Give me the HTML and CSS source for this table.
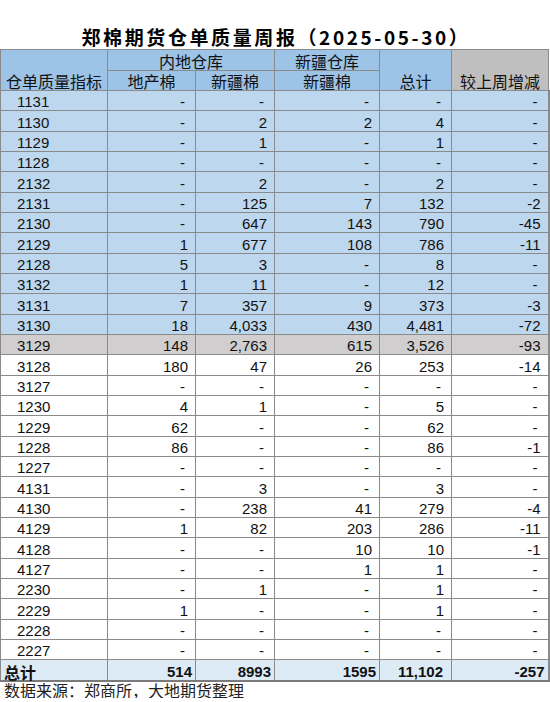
FILE: index.html
```html
<!DOCTYPE html>
<html lang="zh">
<head>
<meta charset="utf-8">
<link rel="stylesheet" href="styles.css">
</head>
<body>
<div class="page">
  <div class="title">郑棉期货仓单质量周报（2025-05-30）</div>
  <table class="t">
    <colgroup>
      <col class="c1"><col class="c2"><col class="c3"><col class="c4"><col class="c5"><col class="c6">
    </colgroup>
    <thead>
      <tr class="hr1">
        <th class="hb lab" rowspan="2">仓单质量指标</th>
        <th class="hb" colspan="2">内地仓库</th>
        <th class="hb">新疆仓库</th>
        <th class="hb lab" rowspan="2">总计</th>
        <th class="hg lab" rowspan="2">较上周增减</th>
      </tr>
      <tr class="hr2">
        <th class="hb">地产棉</th>
        <th class="hb">新疆棉</th>
        <th class="hb">新疆棉</th>
      </tr>
    </thead>
    <tbody>
      <tr class="b"><td>1131</td><td><span class="z">-</span></td><td><span class="z">-</span></td><td><span class="z">-</span></td><td><span class="z">-</span></td><td><span class="z">-</span></td></tr>
      <tr class="b"><td>1130</td><td><span class="z">-</span></td><td>2</td><td>2</td><td>4</td><td><span class="z">-</span></td></tr>
      <tr class="b"><td>1129</td><td><span class="z">-</span></td><td>1</td><td><span class="z">-</span></td><td>1</td><td><span class="z">-</span></td></tr>
      <tr class="b"><td>1128</td><td><span class="z">-</span></td><td><span class="z">-</span></td><td><span class="z">-</span></td><td><span class="z">-</span></td><td><span class="z">-</span></td></tr>
      <tr class="b"><td>2132</td><td><span class="z">-</span></td><td>2</td><td><span class="z">-</span></td><td>2</td><td><span class="z">-</span></td></tr>
      <tr class="b"><td>2131</td><td><span class="z">-</span></td><td>125</td><td>7</td><td>132</td><td>-2</td></tr>
      <tr class="b"><td>2130</td><td><span class="z">-</span></td><td>647</td><td>143</td><td>790</td><td>-45</td></tr>
      <tr class="b"><td>2129</td><td>1</td><td>677</td><td>108</td><td>786</td><td>-11</td></tr>
      <tr class="b"><td>2128</td><td>5</td><td>3</td><td><span class="z">-</span></td><td>8</td><td><span class="z">-</span></td></tr>
      <tr class="b"><td>3132</td><td>1</td><td>11</td><td><span class="z">-</span></td><td>12</td><td><span class="z">-</span></td></tr>
      <tr class="b"><td>3131</td><td>7</td><td>357</td><td>9</td><td>373</td><td>-3</td></tr>
      <tr class="b"><td>3130</td><td>18</td><td>4,033</td><td>430</td><td>4,481</td><td>-72</td></tr>
      <tr class="s"><td>3129</td><td>148</td><td>2,763</td><td>615</td><td>3,526</td><td>-93</td></tr>
      <tr><td>3128</td><td>180</td><td>47</td><td>26</td><td>253</td><td>-14</td></tr>
      <tr><td>3127</td><td><span class="z">-</span></td><td><span class="z">-</span></td><td><span class="z">-</span></td><td><span class="z">-</span></td><td><span class="z">-</span></td></tr>
      <tr><td>1230</td><td>4</td><td>1</td><td><span class="z">-</span></td><td>5</td><td><span class="z">-</span></td></tr>
      <tr><td>1229</td><td>62</td><td><span class="z">-</span></td><td><span class="z">-</span></td><td>62</td><td><span class="z">-</span></td></tr>
      <tr><td>1228</td><td>86</td><td><span class="z">-</span></td><td><span class="z">-</span></td><td>86</td><td>-1</td></tr>
      <tr><td>1227</td><td><span class="z">-</span></td><td><span class="z">-</span></td><td><span class="z">-</span></td><td><span class="z">-</span></td><td><span class="z">-</span></td></tr>
      <tr><td>4131</td><td><span class="z">-</span></td><td>3</td><td><span class="z">-</span></td><td>3</td><td><span class="z">-</span></td></tr>
      <tr class="dk"><td>4130</td><td><span class="z">-</span></td><td>238</td><td>41</td><td>279</td><td>-4</td></tr>
      <tr><td>4129</td><td>1</td><td>82</td><td>203</td><td>286</td><td>-11</td></tr>
      <tr class="dk"><td>4128</td><td><span class="z">-</span></td><td><span class="z">-</span></td><td>10</td><td>10</td><td>-1</td></tr>
      <tr><td>4127</td><td><span class="z">-</span></td><td><span class="z">-</span></td><td>1</td><td>1</td><td><span class="z">-</span></td></tr>
      <tr><td>2230</td><td><span class="z">-</span></td><td>1</td><td><span class="z">-</span></td><td>1</td><td><span class="z">-</span></td></tr>
      <tr><td>2229</td><td>1</td><td><span class="z">-</span></td><td><span class="z">-</span></td><td>1</td><td><span class="z">-</span></td></tr>
      <tr><td>2228</td><td><span class="z">-</span></td><td><span class="z">-</span></td><td><span class="z">-</span></td><td><span class="z">-</span></td><td><span class="z">-</span></td></tr>
      <tr><td>2227</td><td><span class="z">-</span></td><td><span class="z">-</span></td><td><span class="z">-</span></td><td><span class="z">-</span></td><td><span class="z">-</span></td></tr>
      <tr class="tot"><td>总计</td><td>514</td><td>8993</td><td>1595</td><td class="wide">11,102</td><td>-257</td></tr>
    </tbody>
  </table>
  <div class="src">数据来源：郑商所，大地期货整理</div>
</div>
</body>
</html>
```
FILE: styles.css
```css
html, body {
  margin: 0;
  padding: 0;
  background: #ffffff;
}
.page {
  width: 550px;
  color: #111111;
}
.title {
  box-sizing: border-box;
  width: 548px;
  height: 49px;
  padding-top: 25px;
  padding-left: 4px;
  text-align: center;
  font-family: "Noto Sans CJK SC", sans-serif;
  font-weight: 700;
  font-size: 19px;
  line-height: 24px;
  letter-spacing: 2.6px;
  color: #000000;
  white-space: nowrap;
}
.t {
  width: 548px;
  table-layout: fixed;
  border-collapse: collapse;
  font-family: "Liberation Sans", Arial, "Noto Sans CJK SC", sans-serif;
  font-size: 15px;
}
.c1 { width: 107px; }
.c2 { width: 88px; }
.c3 { width: 79px; }
.c4 { width: 105px; }
.c5 { width: 72px; }
.c6 { width: 97px; }
.t th {
  font-family: "Noto Sans CJK SC", sans-serif;
  font-weight: 400;
  font-size: 16px;
  line-height: 18px;
  padding: 0;
  text-align: center;
  vertical-align: bottom;
  border: 1px solid #8a8a8a;
  color: #111111;
}
.t .hr1 { height: 21px; }
.t .hr2 { height: 20px; }
.t .hb { background: #9dc3e6; }
.t .hg { background: #bfbfbf; }
.t td {
  height: 19.33px;
  padding: 0 7px;
  line-height: 17px;
  text-align: right;
  vertical-align: bottom;
  border: 1px solid #8a8a8a;
  white-space: nowrap;
}
.t td:first-child {
  text-align: left;
  padding-left: 16px;
}
.t .z { margin-right: 3px; }
.t tr.b td { background: #bdd7ee; }
.t tr.s td { background: #d0cece; }
.t tr.dk td { border-top-color: #555555; }
.t tr.tot td {
  background: #ddebf7;
  font-weight: 700;
  padding-right: 3px;
  border-bottom: 2px solid #7a7a7a;
}
.t tr.tot td:first-child {
  font-family: "Noto Sans CJK SC", sans-serif;
  font-size: 16px;
  line-height: 16px;
  padding-left: 3px;
}
.t tr.tot td.wide { padding-right: 8px; }
.t td:last-child { border-right: 2px solid #8a8a8a; }
.src {
  margin-top: 0;
  padding-left: 4px;
  font-family: "Noto Sans CJK SC", sans-serif;
  font-size: 16px;
  line-height: 16px;
  color: #222222;
}
```
